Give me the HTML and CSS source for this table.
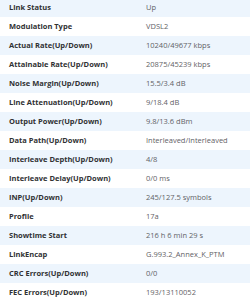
FILE: index.html
```html
<!DOCTYPE html>
<html>
<head>
<meta charset="utf-8">
<link rel="stylesheet" href="styles.css">
</head>
<body>
<table class="info">
<tbody>
<tr><td class="label">Link Status</td><td class="value">Up</td></tr>
<tr><td class="label">Modulation Type</td><td class="value">VDSL2</td></tr>
<tr><td class="label">Actual Rate(Up/Down)</td><td class="value">10240/49677 kbps</td></tr>
<tr><td class="label">Attainable Rate(Up/Down)</td><td class="value">20875/45239 kbps</td></tr>
<tr><td class="label">Noise Margin(Up/Down)</td><td class="value">15.5/3.4 dB</td></tr>
<tr><td class="label">Line Attenuation(Up/Down)</td><td class="value">9/18.4 dB</td></tr>
<tr><td class="label">Output Power(Up/Down)</td><td class="value">9.8/13.6 dBm</td></tr>
<tr><td class="label">Data Path(Up/Down)</td><td class="value">Interleaved/Interleaved</td></tr>
<tr><td class="label">Interleave Depth(Up/Down)</td><td class="value">4/8</td></tr>
<tr><td class="label">Interleave Delay(Up/Down)</td><td class="value">0/0 ms</td></tr>
<tr><td class="label">INP(Up/Down)</td><td class="value">245/127.5 symbols</td></tr>
<tr><td class="label">Profile</td><td class="value">17a</td></tr>
<tr><td class="label">Showtime Start</td><td class="value">216 h 6 min 29 s</td></tr>
<tr><td class="label">LinkEncap</td><td class="value">G.993.2_Annex_K_PTM</td></tr>
<tr><td class="label">CRC Errors(Up/Down)</td><td class="value">0/0</td></tr>
<tr><td class="label">FEC Errors(Up/Down)</td><td class="value">193/13110052</td></tr>
</tbody>
</table>
</body>
</html>
```
FILE: styles.css
```css
html, body {
  margin: 0;
  padding: 0;
  background: #ffffff;
}
body {
  font-family: "Open Sans", "Noto Sans", sans-serif;
  font-size: 7.5px;
}
.info {
  width: 250px;
  border-collapse: collapse;
  margin-top: -2px;
}
.info tr {
  height: 19px;
}
.info tr:nth-child(odd) {
  background: #edf5fd;
}
.info td {
  padding: 0;
  vertical-align: middle;
  line-height: 19px;
  white-space: nowrap;
}
.label {
  width: 137px;
  padding-left: 9px !important;
  font-weight: 700;
  color: #303133;
}
.value {
  color: #5f6266;
}
```
